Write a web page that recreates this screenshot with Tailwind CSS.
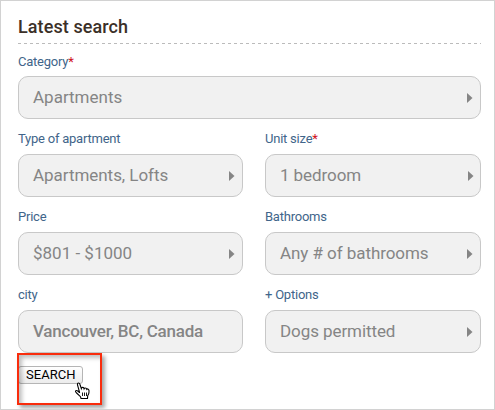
<!DOCTYPE html>
<html lang="en">
<head>
<meta charset="utf-8">
<title>Latest search</title>
<script src="https://cdn.jsdelivr.net/npm/@tailwindcss/browser@4"></script>
</head>
<body class="bg-white">
<main class="relative h-[410px] w-[495px] overflow-hidden border border-[#d2d2d2] pl-[17px] pr-[13px] pt-3 font-[Roboto,sans-serif]">
  <h1 class="h-[30px] text-[18px] leading-[28px] font-medium tracking-[0.09px] text-[#3b3028]">Latest search</h1>
  <div class="h-px w-[463px] bg-[repeating-linear-gradient(90deg,#bbb_0_3px,transparent_3px_6px)]"></div>
  <form class="grid grid-cols-[225px_216px] gap-x-[22px] pt-[9px]">
    <div class="col-span-2 h-[78px]">
      <div class="h-[23px] text-[13px] leading-[18px] tracking-[-0.23px] text-[#41658a]"><span>Category</span><span class="text-[#d0101c]">*</span></div>
      <div class="flex h-[43px] items-center justify-between rounded-[10px] border border-[#c8c8c8] bg-[#f1f1f1] pl-[14px] pr-[7px] text-[17px] text-[#858585]"><span>Apartments</span><svg class="h-[10px] w-[6px]" viewBox="0 0 6 10"><path d="M0 0 L5.5 5 L0 10Z" fill="#858585"/></svg></div>
    </div>
    <div class="h-[78px]">
      <div class="h-[23px] text-[13px] leading-[16px] tracking-[-0.23px] text-[#41658a]"><span>Type of apartment</span></div>
      <div class="flex h-[43px] items-center justify-between rounded-[10px] border border-[#c8c8c8] bg-[#f1f1f1] pl-[14px] pr-[7px] text-[17px] tracking-[-0.04px] text-[#858585]"><span>Apartments, Lofts</span><svg class="h-[10px] w-[6px]" viewBox="0 0 6 10"><path d="M0 0 L5.5 5 L0 10Z" fill="#858585"/></svg></div>
    </div>
    <div class="h-[78px]">
      <div class="h-[23px] text-[13px] leading-[16px] tracking-[-0.23px] text-[#41658a]"><span>Unit size</span><span class="text-[#d0101c]">*</span></div>
      <div class="flex h-[43px] items-center justify-between rounded-[10px] border border-[#c8c8c8] bg-[#f1f1f1] pl-[14px] pr-[6px] text-[17px] tracking-[-0.08px] text-[#858585]"><span>1 bedroom</span><svg class="h-[10px] w-[6px]" viewBox="0 0 6 10"><path d="M0 0 L5.5 5 L0 10Z" fill="#858585"/></svg></div>
    </div>
    <div class="h-[78px]">
      <div class="h-[23px] text-[13px] leading-[16px] tracking-[-0.23px] text-[#41658a]"><span>Price</span></div>
      <div class="flex h-[43px] items-center justify-between rounded-[10px] border border-[#c8c8c8] bg-[#f1f1f1] pl-[14px] pr-[7px] text-[17px] text-[#858585]"><span>$801 - $1000</span><svg class="h-[10px] w-[6px]" viewBox="0 0 6 10"><path d="M0 0 L5.5 5 L0 10Z" fill="#858585"/></svg></div>
    </div>
    <div class="h-[78px]">
      <div class="h-[23px] text-[13px] leading-[16px] tracking-[-0.23px] text-[#41658a]"><span>Bathrooms</span></div>
      <div class="flex h-[43px] items-center justify-between rounded-[10px] border border-[#c8c8c8] bg-[#f1f1f1] pl-[14px] pr-[7px] text-[17px] tracking-[-0.06px] text-[#858585]"><span>Any # of bathrooms</span><svg class="h-[10px] w-[6px]" viewBox="0 0 6 10"><path d="M0 0 L5.5 5 L0 10Z" fill="#858585"/></svg></div>
    </div>
    <div class="h-[78px]">
      <div class="h-[23px] text-[13px] leading-[16px] tracking-[-0.23px] text-[#41658a]"><span>city</span></div>
      <div class="flex h-[43px] items-center rounded-[10px] border border-[#c8c8c8] bg-[#f1f1f1] pl-[14px] text-[17px] font-medium tracking-[-0.24px] text-[#858585]"><span>Vancouver, BC, Canada</span></div>
    </div>
    <div class="h-[78px]">
      <div class="h-[23px] text-[13px] leading-[16px] tracking-[-0.23px] text-[#41658a]"><span>+ Options</span></div>
      <div class="flex h-[43px] items-center justify-between rounded-[10px] border border-[#c8c8c8] bg-[#f1f1f1] pl-[14px] pr-[7px] text-[17px] tracking-[-0.08px] text-[#858585]"><span>Dogs permitted</span><svg class="h-[10px] w-[6px]" viewBox="0 0 6 10"><path d="M0 0 L5.5 5 L0 10Z" fill="#858585"/></svg></div>
    </div>
    <button type="button" class="mt-px h-[18px] w-[65px] rounded-[3px] border border-[#b5b5b5] bg-linear-to-b from-white to-[#ececec] pl-[7px] text-left text-[13px] leading-4 tracking-[0.05px] text-black">SEARCH</button>
  </form>
  <div class="absolute top-[352px] left-[16px] h-[52px] w-[85px] border-2 border-[#f92c0c] shadow-[3px_3px_4px_rgba(0,0,0,.35),inset_3px_3px_4px_rgba(0,0,0,.25)]"></div>
  <svg class="absolute top-[381px] left-[73px] h-[18px] w-[17px]" viewBox="0 0 17 18"><path d="M5.5 11 V10 L3.5 2.8 Q3.2 1 4.5 1 Q5.6 1 6 2.5 L7.3 6.5 Q7.6 5.3 8.7 5.4 Q9.8 5.3 10.1 6.8 Q10.6 5.8 11.5 6 Q12.5 6 12.8 7.3 Q13.4 6.6 14.3 7.2 Q15.3 7.8 15 10 Q15 12 13.7 13.8 L13.5 16.5 H7 L6.5 14.7 L2.6 11 Q1 9.6 1.6 8.8 Q2.4 8 3.8 9 L5.5 10.5" fill="white" stroke="black" stroke-width="1.1"/><path d="M8.5 10.5V14M10.5 10.5V14M12.5 10.5V14" stroke="black" stroke-width=".9"/></svg>
</main>
</body>
</html>
